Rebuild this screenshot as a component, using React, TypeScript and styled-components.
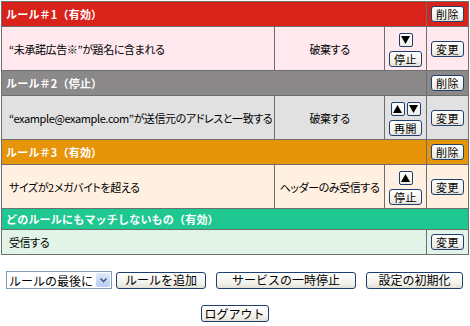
import React from "react";
import styled, { createGlobalStyle, css } from "styled-components";

const GlobalStyle = createGlobalStyle`
  body {
    margin: 0;
    background: #ffffff;
    font-family: "Noto Sans CJK JP", "Liberation Sans", sans-serif;
    font-size: 11px;
    color: #000;
  }
`;

const tones = {
  red: { head: "#d8231b", body: "#ffe9ee" },
  gray: { head: "#8b898a", body: "#e1e1e1" },
  orange: { head: "#e6940a", body: "#fff0e1" },
  green: { head: "#20c891", body: "#e1f4e7" },
};

const Page = styled.div`
  padding: 1px 2px 0 1px;
`;

const RuleTable = styled.table`
  width: 467px;
  border-collapse: collapse;
  table-layout: fixed;
  border: 1px solid #6e6e6e;
`;

const HeadCell = styled.th`
  background: ${(p) => tones[p.tone].head};
  color: #fff;
  font-weight: bold;
  font-size: 11px;
  letter-spacing: 0.2px;
  text-align: left;
  padding: 0 4px;
  height: ${(p) => (p.short ? "20px" : "24px")};
  border: 1px solid #6e6e6e;
`;

const Cell = styled.td`
  background: ${(p) => tones[p.tone].body};
  height: ${(p) => (p.short ? "24px" : "43px")};
  padding: 0 ${(p) => (p.center ? "2px" : "7px")};
  text-align: ${(p) => (p.center ? "center" : "left")};
  white-space: nowrap;
  font-feature-settings: "palt";
  letter-spacing: -0.4px;
  border: 1px solid #6e6e6e;
  ${(p) =>
    p.head &&
    css`
      background: ${tones[p.tone].head};
      height: 24px;
    `}
`;

const Btn = styled.button`
  font-family: inherit;
  font-size: 11px;
  line-height: 12px;
  height: 16px;
  padding: 0 4px;
  color: #000;
  letter-spacing: 0.5px;
  white-space: nowrap;
  background: linear-gradient(#ffffff, #f2f1ea 70%, #e3e1d6);
  border: 1px solid #1f3f70;
  border-radius: 3px;
  cursor: pointer;
  ${(p) =>
    p.wide &&
    css`
      width: ${p.wide}px;
      height: 17px;
      padding: 0;
      font-size: 12px;
      letter-spacing: 0;
    `}
`;

const ArrowBtn = styled.button`
  width: 14px;
  height: 14px;
  padding: 0;
  display: inline-flex;
  align-items: center;
  justify-content: center;
  background: linear-gradient(#ffffff, #efeee6);
  border: 1px solid #1f3f70;
  border-radius: 2px;
  margin: 0 1px;
`;

const Stack = styled.div`
  display: flex;
  flex-direction: column;
  align-items: center;
  gap: 4px;
`;

const Controls = styled.div`
  display: flex;
  justify-content: center;
  align-items: center;
  margin-top: 16px;
  gap: 10px;
`;

const SelectWrap = styled.div`
  position: relative;
  width: 106px;
  height: 18px;
  margin-right: -6px;
`;

const Select = styled.select`
  appearance: none;
  width: 100%;
  height: 100%;
  border: 1px solid #7f9db9;
  background: #fff;
  font-family: inherit;
  font-size: 12px;
  padding: 0 2px;
  border-radius: 0;
`;

const DropBox = styled.span`
  position: absolute;
  right: 2px;
  top: 2px;
  width: 14px;
  height: 14px;
  background: linear-gradient(#dfe9fb, #b8cdf5);
  border-radius: 2px;
  display: flex;
  align-items: center;
  justify-content: center;
  pointer-events: none;
`;

const Footer = styled.div`
  display: flex;
  justify-content: center;
  margin-top: 16px;
`;

const Arrow = ({ up }) => (
  <svg width="9" height="8" viewBox="0 0 9 8">
    <path d={up ? "M4.5 0 L9 8 L0 8 Z" : "M0 0 L9 0 L4.5 8 Z"} fill="#000" />
  </svg>
);

const rules = [
  {
    title: "ルール＃1（有効）",
    tone: "red",
    cond: "“未承諾広告※”が題名に含まれる",
    action: "破棄する",
    up: false,
    down: true,
    toggle: "停止",
  },
  {
    title: "ルール＃2（停止）",
    tone: "gray",
    cond: "“example@example.com”が送信元のアドレスと一致する",
    action: "破棄する",
    up: true,
    down: true,
    toggle: "再開",
  },
  {
    title: "ルール＃3（有効）",
    tone: "orange",
    cond: "サイズが2メガバイトを超える",
    action: "ヘッダーのみ受信する",
    up: true,
    down: false,
    toggle: "停止",
  },
];

const RuleRows = ({ rule }) => (
  <>
    <tr>
      <HeadCell colSpan={3} tone={rule.tone}>
        {rule.title}
      </HeadCell>
      <Cell tone={rule.tone} head center>
        <Btn>削除</Btn>
      </Cell>
    </tr>
    <tr>
      <Cell tone={rule.tone}>{rule.cond}</Cell>
      <Cell tone={rule.tone} center>
        {rule.action}
      </Cell>
      <Cell tone={rule.tone} center>
        <Stack>
          <div>
            {rule.up && (
              <ArrowBtn>
                <Arrow up />
              </ArrowBtn>
            )}
            {rule.down && (
              <ArrowBtn>
                <Arrow />
              </ArrowBtn>
            )}
          </div>
          <Btn>{rule.toggle}</Btn>
        </Stack>
      </Cell>
      <Cell tone={rule.tone} center>
        <Btn>変更</Btn>
      </Cell>
    </tr>
  </>
);

const App = () => {
  return (
    <Page>
      <GlobalStyle />
      <RuleTable>
        <colgroup>
          <col style={{ width: 273 }} />
          <col style={{ width: 110 }} />
          <col style={{ width: 42 }} />
          <col style={{ width: 42 }} />
        </colgroup>
        <tbody>
          {rules.map((r, i) => (
            <RuleRows key={i} rule={r} />
          ))}
          <tr>
            <HeadCell colSpan={4} tone="green" short>
              どのルールにもマッチしないもの（有効）
            </HeadCell>
          </tr>
          <tr>
            <Cell colSpan={3} tone="green" short>
              受信する
            </Cell>
            <Cell tone="green" short center>
              <Btn>変更</Btn>
            </Cell>
          </tr>
        </tbody>
      </RuleTable>

      <Controls>
        <SelectWrap>
          <Select defaultValue="last">
            <option value="last">ルールの最後に</option>
            <option value="first">ルールの最初に</option>
          </Select>
          <DropBox>
            <svg width="7" height="5" viewBox="0 0 7 5">
              <path d="M0.5 0.5 L3.5 3.5 L6.5 0.5" stroke="#4d6185" strokeWidth="1.6" fill="none" />
            </svg>
          </DropBox>
        </SelectWrap>
        <Btn wide={90}>ルールを追加</Btn>
        <Btn wide={140}>サービスの一時停止</Btn>
        <Btn wide={97}>設定の初期化</Btn>
      </Controls>

      <Footer>
        <Btn wide={68}>ログアウト</Btn>
      </Footer>
    </Page>
  );
};

export default App;
